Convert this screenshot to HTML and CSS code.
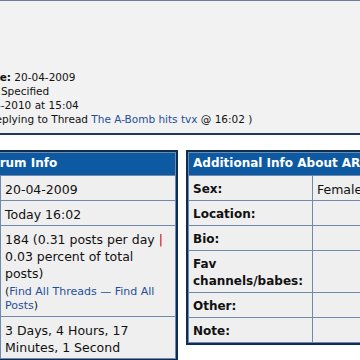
FILE: index.html
```html
<!DOCTYPE html>
<html lang="en">
<head>
    <meta charset="UTF-8">
    <title>Profile - ARIELLE</title>
    <link rel="stylesheet" href="styles.css">
</head>
<body>
<div class="page">
    <div class="profile">
        <div class="stats">
            <div><b>Join Date:</b> 20-04-2009</div>
            <div><b>Job:</b> Not Specified</div>
            <div><b>On:</b> 7-06-2010 at 15:04</div>
            <div>(Busy: Replying to Thread <a href="#">The A-Bomb hits tvx</a> @ 16:02 )</div>
        </div>
    </div>

    <div class="boxes">
        <table class="info forum">
            <colgroup><col class="k"><col class="v"></colgroup>
            <tr><th colspan="2">ARIELLE's Forum Info</th></tr>
            <tr><td class="label">Join Date:</td><td>20-04-2009</td></tr>
            <tr><td class="label">Last Post:</td><td>Today 16:02</td></tr>
            <tr>
                <td class="label">Total Posts:</td>
                <td>184 (0.31 posts per day <span class="sep">|</span> 0.03 percent of total posts)
                    <div class="find">(<a href="#">Find All Threads</a> <a href="#">&mdash;</a> <a href="#">Find All Posts</a>)</div>
                </td>
            </tr>
            <tr><td class="label">Time Online:</td><td>3 Days, 4 Hours, 17 Minutes, 1 Second</td></tr>
        </table>

        <table class="info extra">
            <colgroup><col class="k"><col class="v"></colgroup>
            <tr><th colspan="2">Additional Info About ARIELLE</th></tr>
            <tr><td class="label">Sex:</td><td>Female</td></tr>
            <tr><td class="label">Location:</td><td></td></tr>
            <tr><td class="label">Bio:</td><td></td></tr>
            <tr><td class="label">Fav channels/babes:</td><td></td></tr>
            <tr><td class="label">Other:</td><td></td></tr>
            <tr><td class="label">Note:</td><td></td></tr>
        </table>
    </div>
</div>
</body>
</html>
```

FILE: styles.css
```css
body {
    margin: 0;
    background: #fff;
    font-family: "DejaVu Sans", Verdana, sans-serif;
    color: #111;
    overflow: hidden;
}
a {
    color: #1f4f98;
    text-decoration: none;
}
.page {
    width: 900px;
    margin-left: -93px;
}
.profile {
    background-color: #f2f2f2;
    border-top: 1px solid #6d7b98;
    border-bottom: 2px solid #1b3a5e;
    padding: 69px 0 7px 46px;
    font-size: 10.5px;
    line-height: 14px;
}
.boxes {
    display: flex;
    align-items: flex-start;
    gap: 8px;
    margin-top: 15px;
}
.info {
    border-collapse: separate;
    border-spacing: 1px;
    background-color: #7189ad;
    border: 2px solid #0e2d52;
    table-layout: fixed;
}
.forum {
    width: 271px;
}
.forum col.k {
    width: 90px;
}
.forum col.v {
    width: 174px;
}
.extra {
    width: 350px;
}
.extra col.k {
    width: 123px;
}
.extra col.v {
    width: 220px;
}
.info th {
    background-color: #0d5aa2;
    color: #fff;
    font-size: 12px;
    font-weight: bold;
    text-align: left;
    padding: 3px 4px 4px;
    line-height: 15px;
    white-space: nowrap;
    overflow: hidden;
}
.info td {
    background-color: #efefef;
    font-size: 12.5px;
    line-height: 17px;
    padding: 5px 4px 2px;
    vertical-align: top;
}
.info td.label {
    font-size: 12px;
    font-weight: bold;
}
.info .sep {
    color: #c00;
}
.info .find {
    font-size: 11px;
    line-height: 14px;
    margin: 3px 0 1px;
}
```
